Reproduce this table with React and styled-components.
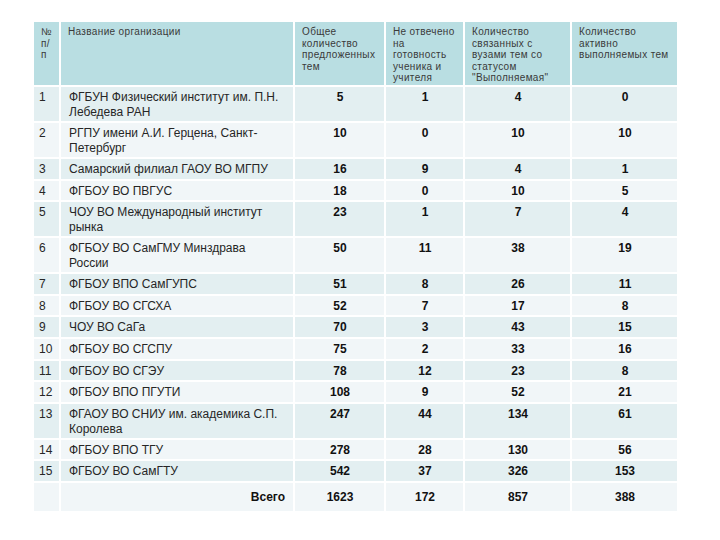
import React from 'react';
import styled, { createGlobalStyle } from 'styled-components';

const GlobalStyle = createGlobalStyle`
	html, body {
		margin: 0;
		padding: 0;
		background: #ffffff;
	}
	body {
		font-family: 'Liberation Sans', Arial, sans-serif;
	}
`;

const Page = styled.div`
	width: 720px;
	height: 540px;
	padding: 20px 0 0 32px;
	box-sizing: border-box;
`;

const Table = styled.table`
	width: 645px;
	border-collapse: collapse;
	table-layout: fixed;
`;

const HeadRow = styled.tr`
	height: 65px;
	background: #b9dee2;
`;

const Row = styled.tr`
	height: ${p => (p.tall ? '36px' : p.total ? '30px' : '21.6px')};
	background: ${p => (p.odd ? '#e3eff1' : '#f1f6f8')};
`;

const Th = styled.th`
	border: 2px solid #ffffff;
	padding: 4px 6px 0 7px;
	vertical-align: top;
	text-align: left;
	font-weight: normal;
	font-size: 10px;
	line-height: 11.6px;
	letter-spacing: 0.35px;
	color: #3a3a3a;
`;

const Td = styled.td`
	border: 2px solid #ffffff;
	padding: 3px 7px 0 ${p => (p.first ? '5px' : '8px')};
	vertical-align: top;
	text-align: left;
	font-size: 12px;
	line-height: 15px;
	color: #262626;
`;

const Num = styled(Td)`
	text-align: center;
	font-weight: bold;
	color: #111111;
`;

const TotalLabel = styled(Td)`
	text-align: right;
	font-weight: bold;
	color: #111111;
	padding-top: 7px;
	padding-right: 8px;
`;

const TotalNum = styled(Num)`
	padding-top: 7px;
`;

const columns = [27, 234, 91, 79, 107, 107];

const headers = [
	'№ п/ п',
	'Название организации',
	'Общее количество предложенных тем',
	'Не отвечено на готовность ученика и учителя',
	'Количество связанных с вузами тем со статусом "Выполняемая"',
	'Количество активно выполняемых тем',
];

const rows = [
	['ФГБУН Физический институт им. П.Н. Лебедева РАН', 5, 1, 4, 0, true],
	['РГПУ имени А.И. Герцена, Санкт-Петербург', 10, 0, 10, 10, true],
	['Самарский филиал ГАОУ ВО МГПУ', 16, 9, 4, 1],
	['ФГБОУ ВО ПВГУС', 18, 0, 10, 5],
	['ЧОУ ВО Международный институт рынка', 23, 1, 7, 4, true],
	['ФГБОУ ВО СамГМУ Минздрава России', 50, 11, 38, 19, true],
	['ФГБОУ ВПО СамГУПС', 51, 8, 26, 11],
	['ФГБОУ ВО СГСХА', 52, 7, 17, 8],
	['ЧОУ ВО СаГа', 70, 3, 43, 15],
	['ФГБОУ ВО СГСПУ', 75, 2, 33, 16],
	['ФГБОУ ВО СГЭУ', 78, 12, 23, 8],
	['ФГБОУ ВПО ПГУТИ', 108, 9, 52, 21],
	['ФГАОУ ВО СНИУ им. академика С.П. Королева', 247, 44, 134, 61, true],
	['ФГБОУ ВПО ТГУ', 278, 28, 130, 56],
	['ФГБОУ ВО СамГТУ', 542, 37, 326, 153],
];

const totals = [1623, 172, 857, 388];

export default function App() {
	return (
		<>
			<GlobalStyle />
			<Page>
				<Table>
					<colgroup>
						{columns.map((w, i) => (
							<col key={i} style={{ width: w }} />
						))}
					</colgroup>
					<thead>
						<HeadRow>
							{headers.map((h, i) => (
								<Th key={i}>{h}</Th>
							))}
						</HeadRow>
					</thead>
					<tbody>
						{rows.map(([name, a, b, c, d, tall], i) => (
							<Row key={i} odd={i % 2 === 0} tall={tall}>
								<Td first>{i + 1}</Td>
								<Td>{name}</Td>
								<Num>{a}</Num>
								<Num>{b}</Num>
								<Num>{c}</Num>
								<Num>{d}</Num>
							</Row>
						))}
						<Row total>
							<Td first />
							<TotalLabel>Всего</TotalLabel>
							{totals.map((t, i) => (
								<TotalNum key={i}>{t}</TotalNum>
							))}
						</Row>
					</tbody>
				</Table>
			</Page>
		</>
	);
}
